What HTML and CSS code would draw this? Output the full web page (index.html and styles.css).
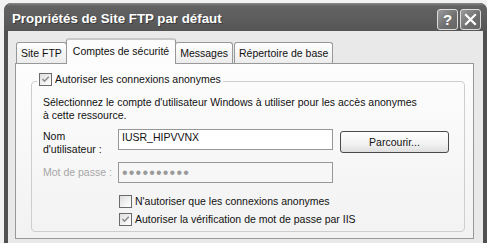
FILE: index.html
```html
<!DOCTYPE html>
<html lang="fr">
<head>
<meta charset="utf-8">
<title>Propriétés de Site FTP par défaut</title>
<link rel="stylesheet" href="styles.css">
</head>
<body>
<div class="window">
  <div class="titlebar">
    <span class="title">Propriétés de Site FTP par défaut</span>
    <div class="caption-btns">
      <span class="cbtn help">?</span>
      <span class="cbtn close"><svg width="13" height="13" viewBox="0 0 13 13"><path d="M2 2 L11 11 M11 2 L2 11" stroke="#fff" stroke-width="2.2" stroke-linecap="square" fill="none"/></svg></span>
    </div>
  </div>
  <div class="client">
    <div class="tabs">
      <div class="tab">Site FTP</div>
      <div class="tab active">Comptes de sécurité</div>
      <div class="tab">Messages</div>
      <div class="tab">Répertoire de base</div>
    </div>
    <div class="panel">
      <fieldset class="group">
        <legend class="legend">
          <span class="box"><svg width="11" height="11" viewBox="0 0 11 11"><path d="M2.5 5 L4.5 7.2 L8.8 2.8" stroke="#8c8c8c" stroke-width="1.6" fill="none"/></svg></span>
          <span>Autoriser les connexions anonymes</span>
        </legend>
        <p class="desc">Sélectionnez le compte d'utilisateur Windows à utiliser pour les accès anonymes<br>à cette ressource.</p>
        <div class="row name-row">
          <label class="field-label">Nom<br>d'utilisateur :</label>
          <div class="input">IUSR_HIPVVNX</div>
          <button class="btn">Parcourir...</button>
        </div>
        <div class="row pass-row">
          <label class="field-label disabled">Mot de passe :</label>
          <div class="input input-disabled"><span class="dots">••••••••••</span></div>
        </div>
        <div class="check-row">
          <span class="box"></span>
          <span>N'autoriser que les connexions anonymes</span>
        </div>
        <div class="check-row second">
          <span class="box"><svg width="11" height="11" viewBox="0 0 11 11"><path d="M2.5 5 L4.5 7.2 L8.8 2.8" stroke="#8c8c8c" stroke-width="1.6" fill="none"/></svg></span>
          <span>Autoriser la vérification de mot de passe par IIS</span>
        </div>
      </fieldset>
    </div>
  </div>
</div>
</body>
</html>
```
FILE: styles.css
```css
html, body {
  margin: 0;
  padding: 0;
}
body {
  width: 487px;
  height: 243px;
  overflow: hidden;
  background: #f2f2f2;
  font-family: "Liberation Sans", Arial, sans-serif;
  font-size: 10.5px;
  line-height: 13px;
  color: #111;
}
.window {
  margin: 3px 0 0 4px;
  width: 483px;
  height: 240px;
  overflow: hidden;
  background: #505050;
  border-radius: 7px 7px 0 0;
  display: flex;
  flex-direction: column;
}
.titlebar {
  height: 28px;
  flex: none;
  display: flex;
  align-items: center;
  padding: 0 6px 0 8px;
  background: linear-gradient(#8a8a8a 0, #626262 3px, #5c5c5c 60%, #555 100%);
  border-radius: 7px 7px 0 0;
}
.title {
  flex: 1;
  color: #fff;
  font-weight: bold;
  font-size: 13.3px;
  line-height: 16px;
  text-shadow: 1px 1px 0 #3a3a3a;
  padding-top: 3px;
}
.caption-btns {
  display: flex;
  gap: 2px;
  align-self: flex-end;
  margin-bottom: 1px;
}
.cbtn {
  width: 21px;
  height: 21px;
  box-sizing: border-box;
  border: 1px solid #dcdcdc;
  border-radius: 3px;
  background: linear-gradient(135deg, #9a9a9a, #6e6e6e 60%, #666);
  display: flex;
  align-items: center;
  justify-content: center;
  color: #fff;
  font-weight: bold;
  font-size: 15px;
  font-family: "Liberation Sans", Arial, sans-serif;
}
.client {
  flex: 1;
  margin: 0 4px;
  background: #e9e9e9;
  padding: 0 9px 0 7px;
  display: flex;
  flex-direction: column;
}
.tabs {
  height: 32px;
  flex: none;
  display: flex;
  align-items: flex-end;
  padding-left: 1px;
}
.tab {
  height: 20px;
  line-height: 20px;
  padding: 0 4px;
  border: 1px solid #989898;
  border-bottom: none;
  border-radius: 3px 3px 0 0;
  background: linear-gradient(#ffffff, #ececec);
  margin-right: 1px;
  white-space: nowrap;
}
.tab.active {
  height: 24px;
  line-height: 22px;
  padding: 0 6px;
  margin: 0 -1px -1px -2px;
  background: #fcfcfc;
  border-top: 2px solid #c8c8c8;
  position: relative;
  z-index: 1;
}
.panel {
  height: 176px;
  flex: none;
  box-sizing: border-box;
  border: 1px solid #989898;
  background: linear-gradient(#fdfdfd, #f2f2f2);
  padding: 0 8px 0 15px;
}
.group {
  margin: 9px 0 0 0;
  border: 1px solid #cecece;
  border-radius: 4px;
  padding: 6px 0 5px 11px;
  min-width: 0;
}
.legend {
  padding: 0 2px;
  margin-left: -6px;
  height: 17px;
  display: flex;
  align-items: flex-start;
  gap: 3px;
}
.box {
  width: 13px;
  height: 13px;
  box-sizing: border-box;
  border: 1px solid #6a6a6a;
  background: linear-gradient(135deg, #dedede, #f6f6f6 70%, #fff);
  display: inline-flex;
  align-items: center;
  justify-content: center;
  flex: none;
}
.desc {
  margin: 0;
}
.row {
  display: grid;
  grid-template-columns: 75px 215px 116px;
}
.name-row {
  margin-top: 7px;
  align-items: start;
}
.name-row .field-label {
  padding-top: 1px;
}
.pass-row {
  margin-top: 6px;
  align-items: center;
}
.field-label.disabled {
  color: #a6a6a6;
}
.input {
  height: 21px;
  box-sizing: border-box;
  border: 1px solid #979797;
  background: #fff;
  padding: 1px 3px 0;
  line-height: 13px;
}
.input-disabled {
  background: #f7f7f7;
  display: flex;
  align-items: center;
  padding: 0 3px;
}
.dots {
  font-size: 16px;
  line-height: 10px;
  letter-spacing: 1.2px;
  color: #9a9a9a;
}
.btn {
  margin: 2px 0 0 7px;
  height: 22px;
  box-sizing: border-box;
  border: 1px solid #4a4a4a;
  border-radius: 3px;
  background: linear-gradient(#ffffff, #f2f2f2 60%, #dedede);
  font-family: "Liberation Sans", Arial, sans-serif;
  font-size: 10.5px;
  color: #111;
  padding: 0;
}
.check-row {
  display: flex;
  align-items: center;
  gap: 3px;
  padding-left: 76px;
  margin-top: 12px;
  height: 13px;
}
.check-row.second {
  margin-top: 5px;
}
```
